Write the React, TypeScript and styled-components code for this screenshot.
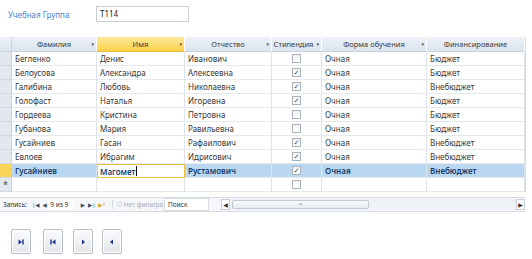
import React from "react";
import styled, { createGlobalStyle, css } from "styled-components";

const Global = createGlobalStyle`
  html, body { margin: 0; padding: 0; background: #ffffff; }
  body { font-family: "Noto Sans", "DejaVu Sans", sans-serif; font-size: 8px; color: #222; }
`;

const Page = styled.div`
  width: 532px;
  height: 259px;
  overflow: hidden;
  display: flex;
  flex-direction: column;
`;

const FieldRow = styled.div`
  display: flex;
  align-items: center;
  height: 16px;
  margin-top: 6px;
  padding-left: 8px;
`;

const FieldLabel = styled.span`
  width: 88px;
  color: #4c88c8;
  font-size: 8px;
`;

const TextBox = styled.div`
  width: 88px;
  height: 14px;
  border: 1px solid #c8cdd4;
  font-size: 8px;
  line-height: 14px;
  padding-left: 3px;
  box-sizing: content-box;
`;

const cols = "12px 85px 88px 87px 50px 105px 98px";

const Grid = styled.div`
  margin-top: 15px;
  width: 525px;
  display: grid;
  grid-template-columns: ${cols};
  grid-template-rows: 15px;
  grid-auto-rows: 14px;
  border-right: 1px solid #d5dbe3;
`;

const HeaderCell = styled.div<{ $active?: boolean }>`
  box-sizing: border-box;
  display: flex;
  align-items: center;
  justify-content: center;
  position: relative;
  font-size: 7.5px;
  color: #3a3a3a;
  white-space: nowrap;
  border-right: 1px solid #ffffff;
  border-bottom: 1px solid #c9d3df;
  background: linear-gradient(#edf2f8, #dbe4ef);
  ${(p) =>
    p.$active &&
    css`
      background: linear-gradient(#fde89a, #f8d24a);
      border-bottom-color: #e8bb3a;
    `}
`;

const Corner = styled.div`
  background: linear-gradient(#edf2f8, #dbe4ef);
  border-right: 1px solid #c9d3df;
  border-bottom: 1px solid #c9d3df;
`;

const Arrow = styled.span`
  position: absolute;
  right: 2px;
  top: 4px;
  font-size: 5px;
  color: #444;
`;

const Selector = styled.div<{ $sel?: boolean }>`
  box-sizing: border-box;
  background: ${(p) => (p.$sel ? "#f7d458" : "#e3e8ef")};
  border-right: 1px solid #c9d3df;
  border-bottom: 1px solid #d0d7e0;
  font-size: 9px;
  color: #444;
  display: flex;
  align-items: center;
  justify-content: center;
  line-height: 1;
`;

const Cell = styled.div<{ $sel?: boolean; $edit?: boolean; $center?: boolean }>`
  box-sizing: border-box;
  padding-left: 3px;
  font-size: 8px;
  line-height: 13px;
  white-space: nowrap;
  overflow: hidden;
  color: #383838;
  border-right: 1px solid #dfe4ea;
  border-bottom: 1px solid #e6eaef;
  display: flex;
  align-items: center;
  ${(p) => p.$center && css`justify-content: center; padding-left: 0;`}
  ${(p) =>
    p.$sel &&
    css`
      background: #bad7f2;
      color: #163d6b;
      font-weight: 600;
    `}
  ${(p) =>
    p.$edit &&
    css`
      background: #ffffff;
      border: 1px solid #f0c040;
      padding-left: 2px;
      color: #163d6b;
      font-weight: 600;
    `}
`;

const Caret = styled.span`
  display: inline-block;
  width: 1px;
  height: 10px;
  background: #111;
  margin-left: 1px;
`;

const Check = styled.span`
  width: 7px;
  height: 7px;
  border: 1px solid #a9b1bb;
  background: linear-gradient(#f2f4f6, #ffffff);
  font-size: 7px;
  line-height: 7px;
  text-align: center;
  color: #2b4a80;
  font-weight: 700;
`;

const NavBar = styled.div`
  margin-top: 5px;
  width: 525px;
  height: 13px;
  display: flex;
  align-items: center;
  border-top: 1px solid #d5dbe3;
  border-bottom: 1px solid #d5dbe3;
  background: #f5f7fa;
  font-size: 6.5px;
  color: #333;
  white-space: nowrap;
`;

const NavLabel = styled.span`
  padding-left: 3px;
  margin-right: 4px;
`;

const NavIcon = styled.span<{ $accent?: boolean }>`
  font-size: 5.5px;
  color: ${(p) => (p.$accent ? "#d9a520" : "#3c4c62")};
  margin: 0 1.5px;
`;

const Counter = styled.span`
  width: 23px;
  height: 10px;
  line-height: 10px;
  background: #fff;
  padding-left: 2px;
  margin-right: 6px;
`;

const Filter = styled.span`
  color: #a5adb7;
  margin-left: 5px;
  padding-left: 4px;
  width: 43px;
  border-left: 1px solid #d5dbe3;
`;

const Search = styled.span`
  width: 40px;
  height: 11px;
  line-height: 11px;
  background: #fff;
  border: 1px solid #d5dbe3;
  padding-left: 3px;
  margin-left: 4px;
`;

const Scroll = styled.div`
  flex: 1;
  margin-left: 12px;
  height: 11px;
  display: flex;
  align-items: center;
  background: #eef1f5;
`;

const ScrollBtn = styled.span`
  width: 9px;
  height: 11px;
  display: flex;
  align-items: center;
  justify-content: center;
  font-size: 6px;
  color: #333;
  border: 1px solid #c8ced6;
  box-sizing: border-box;
  background: #fff;
`;

const Thumb = styled.span`
  width: 137px;
  height: 9px;
  border: 1px solid #c3c9d1;
  border-radius: 2px;
  box-sizing: border-box;
  background: linear-gradient(#fbfcfd, #e7ebf0);
  margin-left: 2px;
  font-size: 5px;
  color: #9aa;
  text-align: center;
  line-height: 7px;
`;

const Spacer = styled.span`
  flex: 1;
`;

const ButtonRow = styled.div`
  display: flex;
  margin-top: 17px;
  padding-left: 11px;
`;

const NavButton = styled.button<{ $gap: number }>`
  width: 20px;
  height: 25px;
  margin: 0 ${(p) => p.$gap}px 0 0;
  padding: 0;
  border: 1px solid #b9bec5;
  border-radius: 2px;
  background: linear-gradient(#fbfbfc, #e3e6ea);
  box-shadow: inset 0 0 0 1px #ffffff;
  display: flex;
  align-items: center;
  justify-content: center;
`;

const Icon = ({ kind }: { kind: "last" | "first" | "next" | "prev" }) => (
  <svg width="8" height="8" viewBox="0 0 8 8">
    {kind === "last" && (
      <>
        <path d="M1.5 1.5 L5 4 L1.5 6.5 Z" fill="#1c2f8c" />
        <rect x="5.3" y="1.5" width="1.4" height="5" fill="#1c2f8c" />
      </>
    )}
    {kind === "first" && (
      <>
        <rect x="1.3" y="1.5" width="1.4" height="5" fill="#1c2f8c" />
        <path d="M6.5 1.5 L3 4 L6.5 6.5 Z" fill="#1c2f8c" />
      </>
    )}
    {kind === "next" && <path d="M3 1.5 L6 4 L3 6.5 Z" fill="#1c2f8c" />}
    {kind === "prev" && <path d="M5 1.5 L2 4 L5 6.5 Z" fill="#1c2f8c" />}
  </svg>
);

type Row = [string, string, string, boolean, string, string];
const rows: Row[] = [
  ["Бегленко", "Денис", "Иванович", false, "Очная", "Бюджет"],
  ["Белоусова", "Александра", "Алексеевна", true, "Очная", "Бюджет"],
  ["Галибина", "Любовь", "Николаевна", true, "Очная", "Внебюджет"],
  ["Голофаст", "Наталья", "Игоревна", true, "Очная", "Бюджет"],
  ["Гордеева", "Кристина", "Петровна", false, "Очная", "Бюджет"],
  ["Губанова", "Мария", "Равильевна", false, "Очная", "Бюджет"],
  ["Гусайниев", "Гасан", "Рафаилович", true, "Очная", "Внебюджет"],
  ["Евлоев", "Ибрагим", "Идрисович", true, "Очная", "Внебюджет"],
  ["Гусайниев", "Магомет", "Рустамович", true, "Очная", "Внебюджет"],
];

const headers = ["Фамилия", "Имя", "Отчество", "Стипендия", "Форма обучения", "Финансирование"];

export default function App() {
  return (
    <Page>
      <Global />
      <FieldRow>
        <FieldLabel>Учебная Группа</FieldLabel>
        <TextBox>Т114</TextBox>
      </FieldRow>
      <Grid>
        <Corner />
        {headers.map((h, i) => (
          <HeaderCell key={h} $active={i === 1}>
            {i === 3 ? <span style={{ marginRight: 6 }}>{h}</span> : h}
            {i < 5 && <Arrow>▾</Arrow>}
          </HeaderCell>
        ))}
        {rows.map((r, i) => {
          const sel = i === rows.length - 1;
          return (
            <React.Fragment key={i}>
              <Selector $sel={sel} />
              <Cell $sel={sel}>{r[0]}</Cell>
              <Cell $sel={sel} $edit={sel}>
                {r[1]}
                {sel && <Caret />}
              </Cell>
              <Cell $sel={sel}>{r[2]}</Cell>
              <Cell $sel={sel} $center>
                <Check>{r[3] ? "✓" : ""}</Check>
              </Cell>
              <Cell $sel={sel}>{r[4]}</Cell>
              <Cell $sel={sel}>{r[5]}</Cell>
            </React.Fragment>
          );
        })}
        <Selector>*</Selector>
        <Cell />
        <Cell />
        <Cell />
        <Cell $center>
          <Check />
        </Cell>
        <Cell />
        <Cell />
      </Grid>
      <NavBar>
        <NavLabel>Запись:</NavLabel>
        <NavIcon>|◀</NavIcon>
        <NavIcon>◀</NavIcon>
        <Counter>9 из 9</Counter>
        <NavIcon>▶</NavIcon>
        <NavIcon>▶|</NavIcon>
        <NavIcon $accent>▶*</NavIcon>
        <Filter>⛉ Нет фильтра</Filter>
        <Search>Поиск</Search>
        <Scroll>
          <ScrollBtn>◀</ScrollBtn>
          <Thumb>≡</Thumb>
          <Spacer />
          <ScrollBtn>▶</ScrollBtn>
        </Scroll>
      </NavBar>
      <ButtonRow>
        <NavButton $gap={12}><Icon kind="last" /></NavButton>
        <NavButton $gap={10}><Icon kind="first" /></NavButton>
        <NavButton $gap={9}><Icon kind="next" /></NavButton>
        <NavButton $gap={0}><Icon kind="prev" /></NavButton>
      </ButtonRow>
    </Page>
  );
}
